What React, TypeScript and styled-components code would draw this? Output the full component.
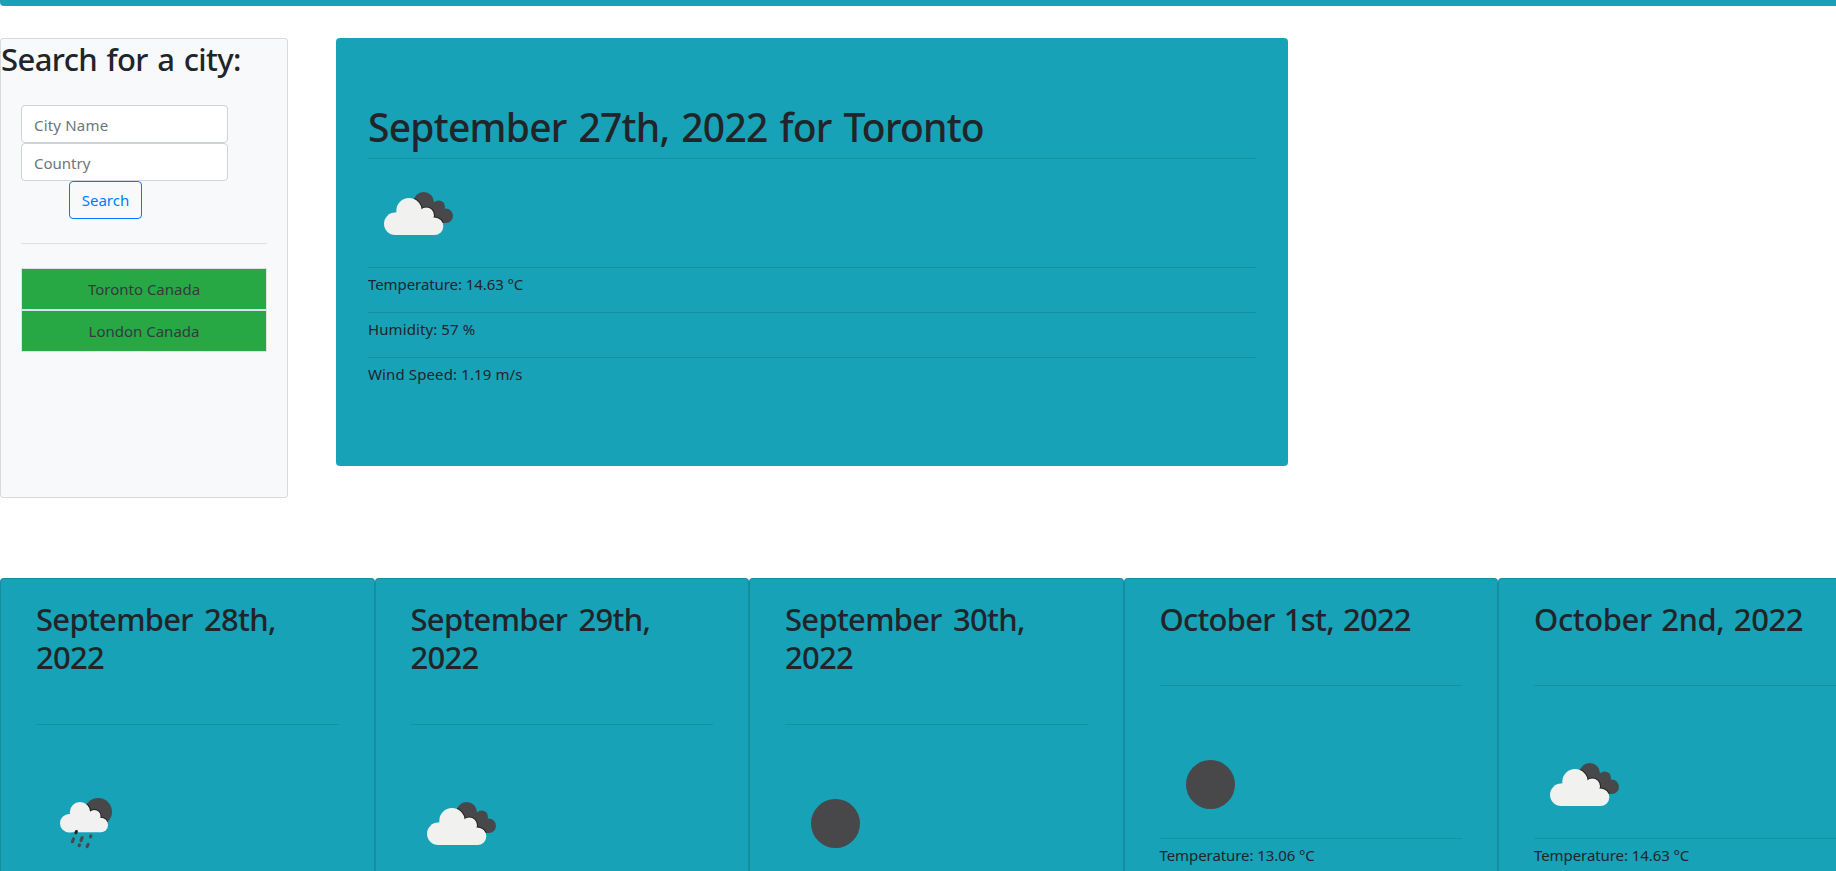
import React from "react";
import styled, { createGlobalStyle } from "styled-components";

const GlobalStyle = createGlobalStyle`
  *, *::before, *::after { box-sizing: border-box; }
  body {
    margin: 0;
    overflow: hidden;
    background: #fff;
    color: #212529;
    font-family: "Segoe UI", "Noto Sans", "Open Sans", sans-serif;
    font-size: 15px;
    line-height: 24px;
  }
`;

const Page = styled.div`
  width: 1872.5px;
  height: 871px;
  overflow: hidden;
`;

const HeaderBar = styled.header`
  height: 6px;
  background: #17a2b8;
  border-radius: 0 0 4px 4px;
`;

const TopRow = styled.div`
  display: flex;
  align-items: flex-start;
  gap: 48px;
  margin-top: 32px;
`;

const Sidebar = styled.aside`
  width: 288px;
  height: 460px;
  border: 1px solid rgba(0, 0, 0, 0.125);
  border-radius: 4px;
  background: #f8f9fb;
`;

const SidebarTitle = styled.h2`
  margin: 0;
  padding-top: 1px;
  font-size: 31px;
  font-weight: 500;
  line-height: 38.4px;
  letter-spacing: -0.6px;
  word-spacing: 1.9px;
`;

const SearchForm = styled.form`
  display: flex;
  flex-direction: column;
  align-items: flex-start;
  margin: 26.6px 20px 0;
`;

const TextInput = styled.input<{ $tracking?: number }>`
  width: 207px;
  height: 38px;
  padding: 2px 12px 0;
  border: 1px solid #ced4da;
  border-radius: 4px;
  background: #fff;
  font: inherit;
  letter-spacing: ${(p) => p.$tracking ?? 0}px;
  &::placeholder {
    color: #6c757d;
    opacity: 1;
  }
`;

const SearchButton = styled.button`
  width: 73px;
  height: 38px;
  margin-left: 48px;
  padding: 0 0 1px;
  border: 1px solid #007bff;
  border-radius: 4px;
  background: transparent;
  color: #007bff;
  font: inherit;
`;

const Divider = styled.hr<{ $top: number; $bottom: number }>`
  height: 1px;
  margin: ${(p) => p.$top}px 0 ${(p) => p.$bottom}px;
  border: 0;
  background: rgba(0, 0, 0, 0.1);
`;

const History = styled.div`
  margin: 0 20px;
`;

const HistoryItem = styled.button`
  display: block;
  width: 100%;
  height: 42px;
  padding: 0 0 1px;
  border: 1px solid #dee2e6;
  background: #28a745;
  color: #343a40;
  font: inherit;
`;

const CurrentCard = styled.section`
  width: 952px;
  height: 428px;
  padding: 65px 32px 0;
  border-radius: 4px;
  background: #17a2b8;
`;

const CurrentTitle = styled.h1`
  margin: 0;
  font-size: 39px;
  font-weight: 500;
  line-height: 48px;
  letter-spacing: -0.76px;
  word-spacing: 2.6px;
`;

const Reading = styled.p<{ $tracking: number }>`
  margin: 0;
  letter-spacing: ${(p) => p.$tracking}px;
`;

const Icon = styled.svg`
  display: block;
  width: 100px;
  height: 100px;
`;

const ForecastRow = styled.div`
  display: grid;
  grid-template-columns: repeat(5, 374.5px);
  margin-top: 80px;
`;

const ForecastCard = styled.article`
  height: 420px;
  padding: 21px 35px 0;
  border: 1px solid rgba(0, 0, 0, 0.125);
  border-radius: 4px;
  background: #17a2b8;
`;

const ForecastTitle = styled.h2<{ $tracking: number; $words: number }>`
  margin: 0;
  font-size: 31px;
  font-weight: 500;
  line-height: 38.4px;
  letter-spacing: ${(p) => p.$tracking}px;
  word-spacing: ${(p) => p.$words}px;
`;

function Clouds({ id }: { id: string }) {
  const back = (
    <>
      <circle cx="55.7" cy="38.3" r="10.3" />
      <circle cx="70.7" cy="42.7" r="6.3" />
      <circle cx="77.8" cy="51.8" r="7.2" />
      <path d="M50 40L65 37.5L73 43L78 46V59H52Z" />
    </>
  );
  const front = (
    <>
      <circle cx="27.2" cy="59.8" r="11.2" />
      <circle cx="41" cy="46.7" r="12.7" />
      <circle cx="58.3" cy="51.2" r="7.7" />
      <circle cx="66.5" cy="62.2" r="8.8" />
      <path d="M27.2 71V48.6H41L58 47L60 58L66.2 60V71Z" />
    </>
  );
  return (
    <Icon viewBox="0 0 100 100">
      <clipPath id={id}>{back}</clipPath>
      <g fill="#48484a">{back}</g>
      <g clipPath={`url(#${id})`} fill="#222" stroke="#222" strokeWidth="2">
        {front}
      </g>
      <g fill="#f1f1f0">{front}</g>
    </Icon>
  );
}

function Moon() {
  return (
    <Icon viewBox="0 0 100 100">
      <circle cx="50.5" cy="49.5" r="24.5" fill="#48484a" />
    </Icon>
  );
}

function Rain() {
  const front = (
    <>
      <circle cx="33.2" cy="49.2" r="9.2" />
      <circle cx="44" cy="38.2" r="10.2" />
      <circle cx="58.3" cy="42.2" r="6.2" />
      <circle cx="64.7" cy="51" r="7.3" />
      <path d="M33.2 58.3V40H44L58 38L60 47L64.7 49V58.3Z" />
    </>
  );
  return (
    <Icon viewBox="0 0 100 100">
      <clipPath id="rain-moon">
        <circle cx="62.2" cy="37.8" r="13.8" />
      </clipPath>
      <circle cx="62.2" cy="37.8" r="13.8" fill="#48484a" />
      <g clipPath="url(#rain-moon)" fill="#222" stroke="#222" strokeWidth="2">
        {front}
      </g>
      <g fill="#f1f1f2">{front}</g>
      <g stroke="#48484a" strokeWidth="3.1" strokeLinecap="round">
        <path d="M39.9 58.7L40.4 57.5" stroke="#222" />
        <path d="M36.4 67.7L37.5 64.9M45 66.6L46.2 63.7M54.5 62.8L54.9 61.9M43.1 71.7L43.5 70.9M51.1 72.6L52.2 70.4" />
      </g>
    </Icon>
  );
}

type Day = {
  date: string;
  tracking: number;
  words: number;
  icon: React.ReactNode;
  temp?: string;
};

const forecast: Day[] = [
  { date: "September 28th, 2022", tracking: -0.72, words: 4, icon: <Rain /> },
  { date: "September 29th, 2022", tracking: -0.72, words: 4, icon: <Clouds id="clouds-2" /> },
  { date: "September 30th, 2022", tracking: -0.72, words: 4, icon: <Moon /> },
  { date: "October 1st, 2022", tracking: -0.76, words: 1.8, icon: <Moon />, temp: "13.06" },
  { date: "October 2nd, 2022", tracking: -0.4, words: 1.8, icon: <Clouds id="clouds-5" />, temp: "14.63" },
];

export default function App() {
  return (
    <Page>
      <GlobalStyle />
      <HeaderBar />
      <TopRow>
        <Sidebar>
          <SidebarTitle>Search for a city:</SidebarTitle>
          <SearchForm>
            <TextInput placeholder="City Name" $tracking={0.19} />
            <TextInput placeholder="Country" />
            <SearchButton type="button">Search</SearchButton>
          </SearchForm>
          <History>
            <Divider $top={24} $bottom={24} />
            <HistoryItem>Toronto Canada</HistoryItem>
            <HistoryItem>London Canada</HistoryItem>
          </History>
        </Sidebar>
        <CurrentCard>
          <CurrentTitle>September 27th, 2022 for Toronto</CurrentTitle>
          <Divider $top={7} $bottom={5} />
          <Clouds id="clouds-now" />
          <Divider $top={3} $bottom={4} />
          <Reading $tracking={-0.08}>Temperature: 14.63 °C</Reading>
          <Divider $top={16} $bottom={4} />
          <Reading $tracking={0.1}>Humidity: 57 %</Reading>
          <Divider $top={16} $bottom={4} />
          <Reading $tracking={0.12}>Wind Speed: 1.19 m/s</Reading>
        </CurrentCard>
      </TopRow>
      <ForecastRow>
        {forecast.map((day) => (
          <ForecastCard key={day.date}>
            <ForecastTitle $tracking={day.tracking} $words={day.words}>
              {day.date}
            </ForecastTitle>
            <Divider $top={46.8} $bottom={49} />
            {day.icon}
            <Divider $top={3} $bottom={4} />
            {day.temp && <Reading $tracking={-0.08}>Temperature: {day.temp} °C</Reading>}
          </ForecastCard>
        ))}
      </ForecastRow>
    </Page>
  );
}
